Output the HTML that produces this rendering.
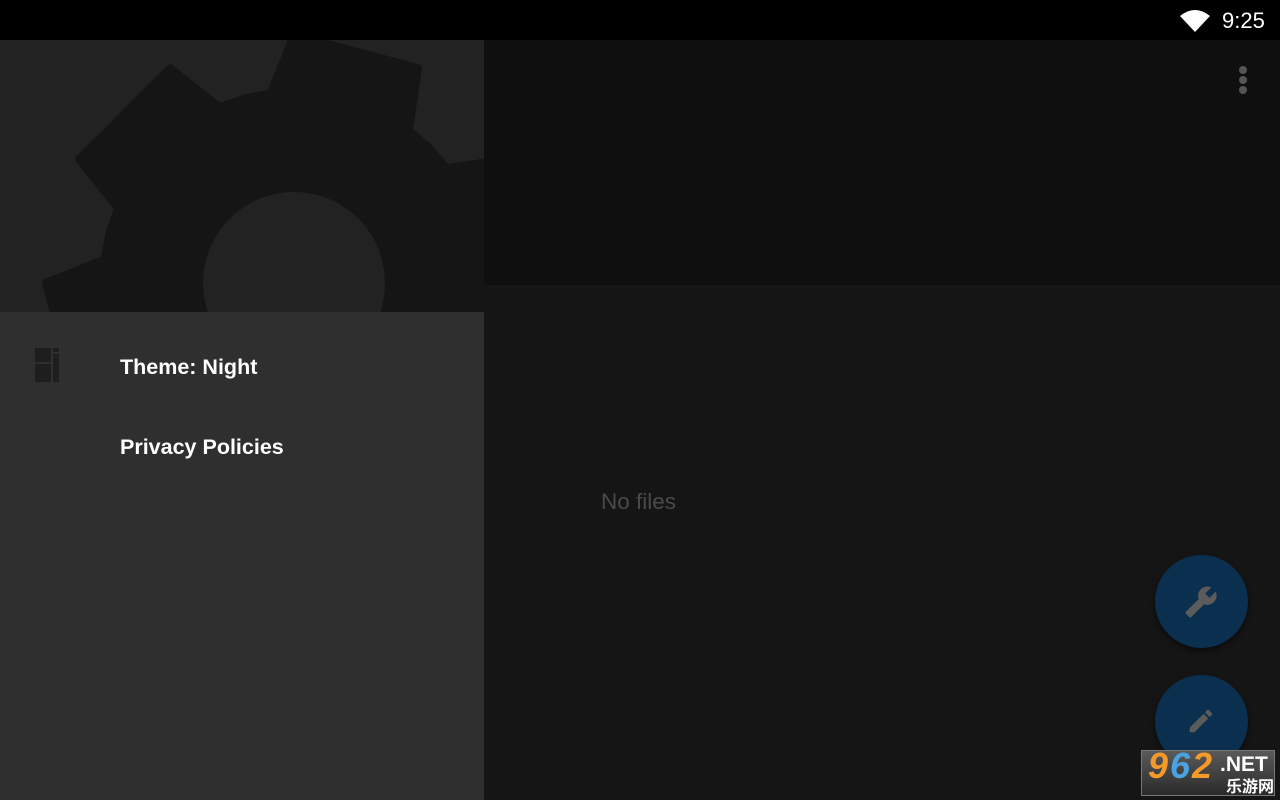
<!DOCTYPE html>
<html><head><meta charset="utf-8"><style>
*{margin:0;padding:0;box-sizing:border-box}
body{width:1280px;height:800px;overflow:hidden;background:#151515;font-family:"Liberation Sans",Roboto,sans-serif;position:relative}
.abs{position:absolute}
</style></head><body>
<div class="abs" style="left:0;top:0;width:1280px;height:40px;background:#000"></div>
<svg class="abs" style="left:1178px;top:8px" width="34" height="26" viewBox="0 0 34 26"><path d="M2 8 Q17 -4 32 8 L17 24 Z" fill="#fff"/></svg>
<div class="abs" style="left:1222px;top:8px;color:#fff;font-size:22px;line-height:26px">9:25</div>
<div class="abs" style="left:484px;top:40px;width:796px;height:245px;background:#0f0f0f"></div>
<div class="abs" style="left:484px;top:285px;width:796px;height:515px;background:#151515"></div>
<div class="abs" style="left:1239px;top:66px;width:8px;height:8px;border-radius:50%;background:#555"></div>
<div class="abs" style="left:1239px;top:76px;width:8px;height:8px;border-radius:50%;background:#555"></div>
<div class="abs" style="left:1239px;top:86px;width:8px;height:8px;border-radius:50%;background:#555"></div>
<div class="abs" style="left:601px;top:489px;color:#4a4a4a;font-size:22.5px">No files</div>
<div class="abs" style="left:1155px;top:555px;width:93px;height:93px;border-radius:50%;background:#0a2f4f;box-shadow:0 3px 6px rgba(0,0,0,.5)"></div>
<svg class="abs" style="left:1184px;top:585px" width="34" height="34" viewBox="0 0 24 24"><path fill="#5b5b5b" d="M22.7 19l-9.1-9.1c.9-2.3.4-5-1.5-6.9-2-2-5-2.4-7.4-1.3L9 6 6 9 1.6 4.7C.4 7.1.9 10.1 2.9 12.1c1.9 1.9 4.6 2.4 6.9 1.5l9.1 9.1c.4.4 1 .4 1.4 0l2.3-2.3c.5-.4.5-1.1.1-1.4z" transform="scale(-1,1) translate(-24,0)"/></svg>
<div class="abs" style="left:1155px;top:675px;width:93px;height:93px;border-radius:50%;background:#0a2f4f;box-shadow:0 3px 6px rgba(0,0,0,.5)"></div>
<svg class="abs" style="left:1186px;top:706px" width="30" height="30" viewBox="0 0 24 24"><path fill="#5b5b5b" d="M3 17.25V21h3.75L17.81 9.94l-3.75-3.75L3 17.25zM20.71 7.04c.39-.39.39-1.02 0-1.41l-2.34-2.34c-.39-.39-1.02-.39-1.41 0l-1.83 1.83 3.75 3.75 1.83-1.83z"/></svg>
<div class="abs" style="left:1141px;top:750px;width:134px;height:46px;background:linear-gradient(#5a5a5a,#2a2a2a);border:1px solid #777;font-weight:bold;font-style:italic">
<span class="abs" style="left:6px;top:-6px;font-size:36px;color:#f39a2a">9</span><span class="abs" style="left:28px;top:-6px;font-size:36px;color:#4aa3e0">6</span><span class="abs" style="left:50px;top:-6px;font-size:36px;color:#f39a2a">2</span>
<span class="abs" style="left:78px;top:2px;font-size:21px;color:#fff;font-style:normal">.NET</span>
<span class="abs" style="left:84px;top:22px;font-size:16px;color:#fff;font-style:normal;font-family:'Noto Sans CJK SC',sans-serif">乐游网</span></div>
<div class="abs" style="left:0;top:40px;width:484px;height:760px;background:#2f2f2f"></div>
<svg class="abs" style="left:0;top:40px" width="484" height="272" viewBox="0 40 484 272">
<rect x="0" y="40" width="484" height="272" fill="#222"/>
<path id="g" fill="#151515" stroke="#151515" stroke-width="8" stroke-linejoin="round"/>
<circle cx="294" cy="283" r="91" fill="#222"/>
</svg>
<script>
(function(){var cx=294,cy=283,rb=191,rt=248,n=6,s=-135*Math.PI/180,d="",R=Math.PI/180;
for(var i=0;i<n;i++){var a=s+i*2*Math.PI/n,p=2*Math.PI/n;
var pts=[[a-p/2,rb],[a-22*R,rb],[a-15*R,rt],[a+15*R,rt],[a+22*R,rb]];
pts.forEach(function(q,j){d+=(i==0&&j==0?"M":"L")+(cx+q[1]*Math.cos(q[0])).toFixed(1)+" "+(cy+q[1]*Math.sin(q[0])).toFixed(1)+" ";});}
document.getElementById("g").setAttribute("d",d+"Z");})();
</script>
<div class="abs" style="left:35px;top:348px;width:16px;height:14px;background:#1e1e1e"></div>
<div class="abs" style="left:35px;top:364px;width:16px;height:18px;background:#1e1e1e"></div>
<div class="abs" style="left:53px;top:348px;width:6px;height:4px;background:#1e1e1e"></div>
<div class="abs" style="left:53px;top:354px;width:6px;height:28px;background:#1e1e1e"></div>
<div class="abs" style="left:120px;top:355px;color:#fff;font-size:21.5px;font-weight:bold">Theme: Night</div>
<div class="abs" style="left:120px;top:435px;color:#fff;font-size:21.5px;font-weight:bold">Privacy Policies</div>
</body></html>
